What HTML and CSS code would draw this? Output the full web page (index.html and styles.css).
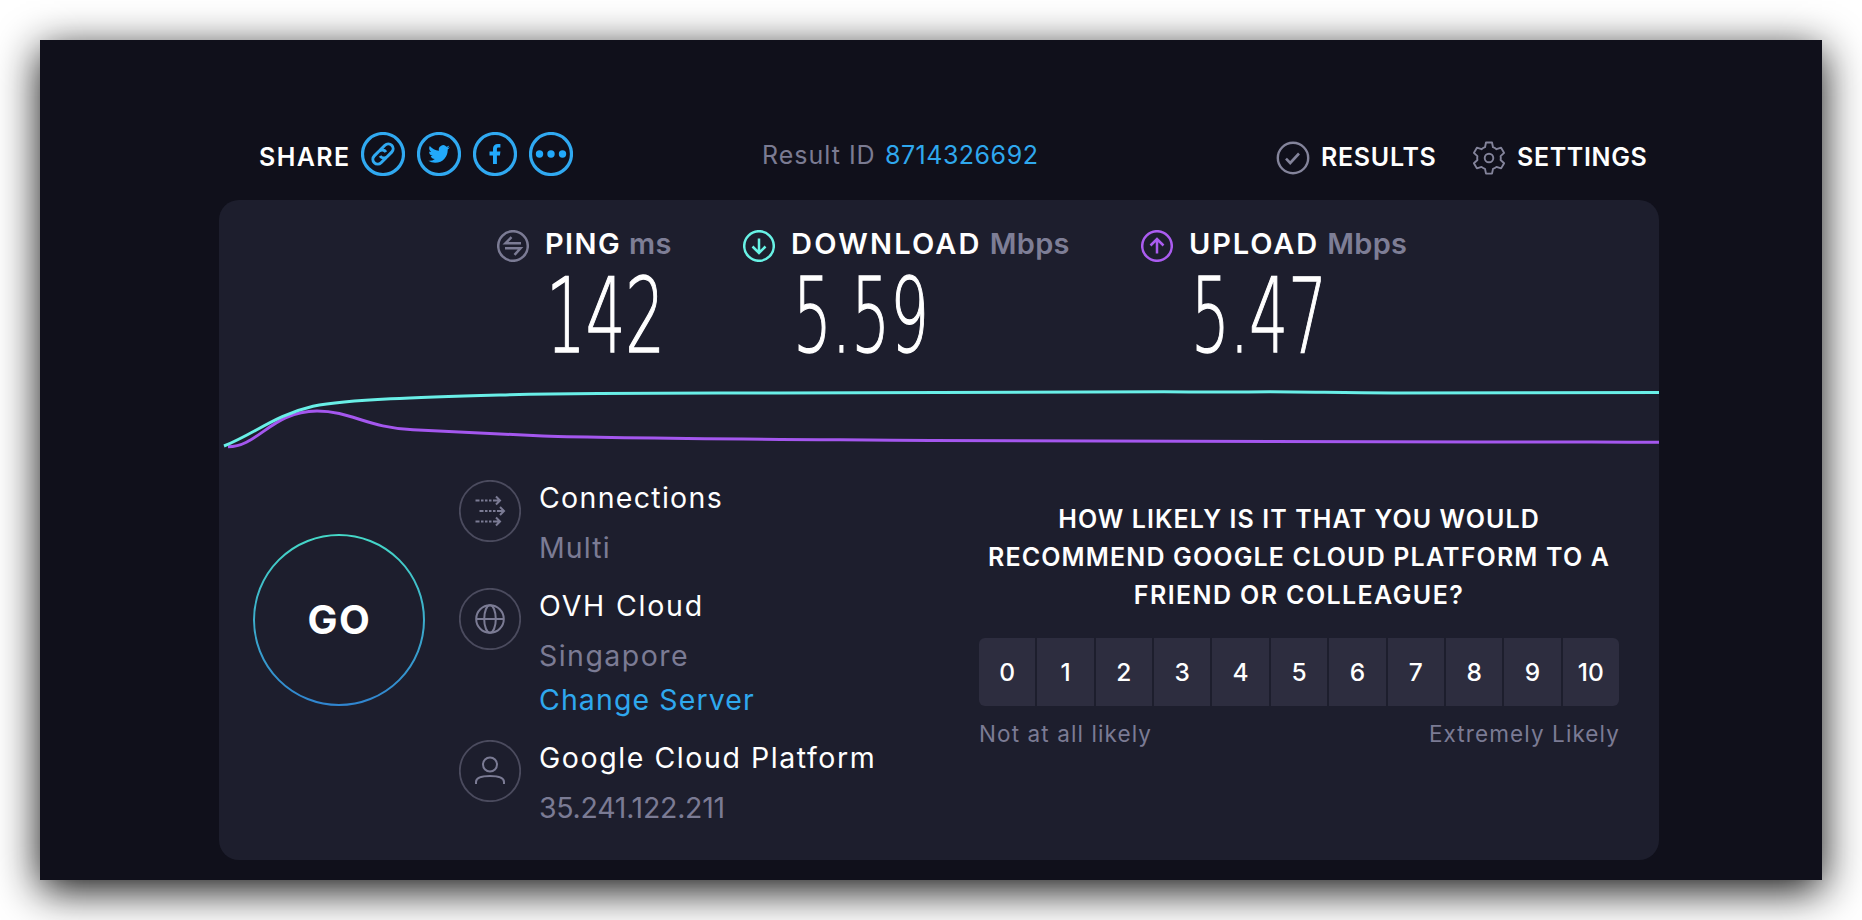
FILE: index.html
```html
<!DOCTYPE html>
<html lang="en">
<head>
<meta charset="utf-8">
<title>Speedtest</title>
<link rel="stylesheet" href="styles.css">
</head>
<body>
<main class="window">
  <header class="topbar">
    <span class="caps share-label">SHARE</span>
    <div class="share-icons">
      <svg class="share" viewBox="0 0 44 44"><circle cx="22" cy="22" r="20.5"/><g transform="rotate(-45 22 22)" stroke-width="3"><path d="M22 26.800h-7.500a4.800 4.800 0 0 1 0-9.600h6.500a4.600 4.600 0 0 1 4.500 5.500"/><path d="M22 17.200h7.500a4.800 4.800 0 0 1 0 9.600h-6.500a4.600 4.600 0 0 1-4.500-5.500"/></g></svg>
      <svg class="share" viewBox="0 0 44 44"><circle cx="22" cy="22" r="20.5"/><path class="solid" transform="translate(11.300 11.200) scale(.9)" d="M23.953 4.570a10 10 0 01-2.825.775 4.958 4.958 0 002.163-2.723c-.951.555-2.005.959-3.127 1.184a4.920 4.920 0 00-8.384 4.482C7.690 8.095 4.067 6.130 1.640 3.162a4.822 4.822 0 00-.666 2.475c0 1.710.870 3.213 2.188 4.096a4.904 4.904 0 01-2.228-.616v.060a4.923 4.923 0 003.946 4.827 4.996 4.996 0 01-2.212.085 4.936 4.936 0 004.604 3.417 9.867 9.867 0 01-6.102 2.105c-.390 0-.779-.023-1.170-.067a13.995 13.995 0 007.557 2.209c9.053 0 13.998-7.496 13.998-13.985 0-.210 0-.420-.015-.630A9.935 9.935 0 0024 4.590z"/></svg>
      <svg class="share" viewBox="0 0 44 44"><circle cx="22" cy="22" r="20.5"/><path class="solid" d="M20 32V23.500h-3.500v-4H20v-2.700c0-3.300 2-4.900 4.900-4.900h2.500v3.600h-2c-1.200 0-1.500.7-1.500 1.700v2.300h3.500l-.5 4h-3V32z"/></svg>
      <svg class="share" viewBox="0 0 44 44"><circle cx="22" cy="22" r="20.5"/><g class="solid"><circle cx="10.500" cy="22" r="3.700"/><circle cx="22" cy="22" r="3.700"/><circle cx="33.500" cy="22" r="3.700"/></g></svg>
    </div>
    <div class="result"><span class="result-label">Result ID</span><a class="result-id">8714326692</a></div>
    <svg class="nav-icon" viewBox="0 0 34 34"><circle cx="17" cy="17" r="15.200" stroke-width="2.400"/><path d="M10 17.700l4.200 4.300 8.800-9.500" stroke-width="2.600"/></svg>
    <span class="caps nav-results">RESULTS</span>
    <svg class="nav-icon" viewBox="0 0 34 34"><path stroke-width="1.900" stroke-linejoin="round" d="M14 1.500h6l1 4.700q2 .7 3.500 2l4.600-1.500 3 5.200-3.500 3.200q.4 2 0 3.900l3.500 3.200-3 5.200-4.600-1.500q-1.500 1.300-3.500 2l-1 4.700h-6l-1-4.700q-2-.7-3.500-2l-4.600 1.500-3-5.200 3.500-3.200q-.4-2 0-3.900l-3.500-3.200 3-5.200 4.600 1.500q1.500-1.300 3.500-2z"/><circle cx="17" cy="17" r="4.300" stroke-width="1.900"/></svg>
    <span class="caps nav-settings">SETTINGS</span>
  </header>

  <section class="panel">
    <div class="metrics">
      <div class="metric ping">
        <svg class="metric-icon" viewBox="0 0 32 32"><circle cx="16" cy="16" r="14.800"/><path d="M24 13.200H8.500l6-6M8 18.300h15.500l-6 6.500"/></svg>
        <div class="metric-body">
          <div class="metric-head"><span class="metric-name">PING</span><span class="unit">ms</span></div>
          <svg class="value" width="150" height="90"><text x="1" y="78" textLength="119" lengthAdjust="spacingAndGlyphs">142</text></svg>
        </div>
      </div>
      <div class="metric download">
        <svg class="metric-icon" viewBox="0 0 32 32"><circle cx="16" cy="16" r="14.800"/><path d="M16 8.500v14.500M9.500 16.500l6.500 6.500 6.500-6.500"/></svg>
        <div class="metric-body">
          <div class="metric-head"><span class="metric-name">DOWNLOAD</span><span class="unit">Mbps</span></div>
          <svg class="value" width="150" height="90"><text x="2" y="78" textLength="136" lengthAdjust="spacingAndGlyphs">5.59</text></svg>
        </div>
      </div>
      <div class="metric upload">
        <svg class="metric-icon" viewBox="0 0 32 32"><circle cx="16" cy="16" r="14.800"/><path d="M16 23.500V9M9.500 15.500L16 9l6.500 6.500"/></svg>
        <div class="metric-body">
          <div class="metric-head"><span class="metric-name">UPLOAD</span><span class="unit">Mbps</span></div>
          <svg class="value" width="150" height="90"><text x="2" y="78" textLength="136" lengthAdjust="spacingAndGlyphs">5.47</text></svg>
        </div>
      </div>
    </div>

    <svg class="chart" viewBox="219 380 1440 80">
      <path class="line-up" d="M228 446.800C258 447 272 411 317 411C351 411 368 428 413 429.700C460 432 503 434 543 436C620 438.500 740 439 931 440.500C1150 442 1350 441.500 1480 442C1560 441.500 1610 442.500 1659 442.200"/>
      <path class="line-down" d="M224 446C256 433 275 415 313 406.200C350 399 430 397 510 394.700C600 392.800 680 393.200 780 393C950 393 1060 391.800 1164 391.800C1190 391.800 1220 392.500 1270 391.800C1310 391.800 1350 393.200 1400 393C1500 393 1560 392.300 1659 392.500"/>
    </svg>

    <div class="details">
      <button class="go"><svg viewBox="0 0 172 172"><defs><linearGradient id="ring" x1="0" y1="0" x2="0" y2="1"><stop offset="0" stop-color="#45d9c8"/><stop offset=".5" stop-color="#3cadcb"/><stop offset="1" stop-color="#3085d0"/></linearGradient></defs><circle cx="86" cy="86" r="85" fill="none" stroke="url(#ring)" stroke-width="2"/></svg><span>GO</span></button>

      <div class="info">
        <div class="info-row">
          <svg class="info-icon" viewBox="0 0 62 62"><circle class="ring" cx="31" cy="31" r="30.200"/><path d="M16.500 20.500h4M22 20.500h2.500M26 20.500h2.500M30 20.500h2.500M34 20.500h7M37 16.500l4 4-4 4M20.500 31h4M26 31h2.500M30 31h2.500M34 31h2.500M38 31h7M41 27l4 4-4 4M16.500 41.500h4M22 41.500h2.500M26 41.500h2.500M30 41.500h2.500M34 41.500h7M37 37.500l4 4-4 4"/></svg>
          <div class="info-text"><div class="info-title t-conn">Connections</div><div class="info-sub t-multi">Multi</div></div>
        </div>
        <div class="info-row server">
          <svg class="info-icon" viewBox="0 0 62 62"><circle class="ring" cx="31" cy="31" r="30.200"/><circle cx="31" cy="31" r="13.800"/><ellipse cx="31" cy="31" rx="5.800" ry="13.800"/><path d="M17 31h28"/></svg>
          <div class="info-text"><div class="info-title t-ovh">OVH Cloud</div><div class="info-sub t-sing">Singapore</div><a class="change">Change Server</a></div>
        </div>
        <div class="info-row">
          <svg class="info-icon" viewBox="0 0 62 62"><circle class="ring" cx="31" cy="31" r="30.200"/><circle cx="31" cy="24.500" r="7"/><path d="M17 44v-2c0-4.500 5-6 14-6s14 1.500 14 6v2"/></svg>
          <div class="info-text"><div class="info-title t-goog">Google Cloud Platform</div><div class="info-sub t-ip">35.241.122.211</div></div>
        </div>
      </div>

      <div class="survey">
        <h2><span class="q1">HOW LIKELY IS IT THAT YOU WOULD</span><br><span class="q2">RECOMMEND GOOGLE CLOUD PLATFORM TO A</span><br><span class="q3">FRIEND OR COLLEAGUE?</span></h2>
        <div class="scale"><span>0</span><span>1</span><span>2</span><span>3</span><span>4</span><span>5</span><span>6</span><span>7</span><span>8</span><span>9</span><span>10</span></div>
        <div class="legend"><span class="low">Not at all likely</span><span class="high">Extremely Likely</span></div>
      </div>
    </div>
  </section>
</main>
</body>
</html>
```
FILE: styles.css
```css
* { box-sizing: border-box; }
body { margin: 0; padding: 40px; height: 920px; overflow: hidden; background: #fff; font-family: Inter, "Liberation Sans", sans-serif; color: #fff; }
svg { display: block; flex: none; }
.window { width: 1782px; height: 840px; padding: 90px 163px 0 179px; background: #10101b; box-shadow: 0 10px 40px rgba(0, 0, 0, .95); }
.topbar { display: flex; height: 70px; padding-left: 40px; white-space: nowrap; }
.caps { font-size: 25px; font-weight: 600; line-height: 54px; }
.share-label { width: 102px; letter-spacing: 1.400px; }
.share-icons { display: flex; gap: 12px; width: 402px; padding-top: 2px; }
.share { width: 44px; height: 44px; fill: none; stroke: #30a9f1; stroke-width: 3.200; }
.share .solid { fill: #22a9fb; stroke: none; }
.result { display: flex; width: 513px; font-size: 25px; line-height: 50px; }
.result-label { width: 123px; margin-left: -1px; color: #7b7b92; letter-spacing: 1px; }
.result-id { color: #2fa8ee; letter-spacing: .500px; }
.nav-icon { width: 34px; height: 34px; margin-top: 11px; fill: none; stroke: #84849b; }
.nav-results { width: 162px; padding-left: 11px; letter-spacing: .7px; }
.nav-settings { padding-left: 11px; letter-spacing: .650px; }

.panel { width: 1440px; height: 660px; border-radius: 20px; background: #1d1e2d; }
.metrics { display: flex; height: 180px; padding: 22px 0 0 278px; white-space: nowrap; }
.metric { display: flex; gap: 16px; }
.ping { width: 246px; }
.download { width: 398px; }
.metric-icon { width: 32px; height: 32px; margin-top: 8px; fill: none; stroke: #7b7b94; stroke-width: 2.500; }
.download .metric-icon { stroke: #68f2e5; }
.upload .metric-icon { stroke: #ab5cf0; }
.metric-head { display: flex; gap: 8px; height: 52px; font-size: 29px; font-weight: 600; line-height: 44px; }
.metric-name { letter-spacing: 1.400px; }
.download .metric-name { letter-spacing: 2.200px; }
.upload .metric-name { letter-spacing: 1.900px; }
.unit { color: #7e7e96; letter-spacing: .3px; }
.value { overflow: visible; fill: #fff; font: 200 103px "DejaVu Sans Light", "DejaVu Sans", sans-serif; }
.value text { stroke: #fff; stroke-width: 1.400; }
.chart { width: 1440px; height: 80px; fill: none; stroke-width: 3; }
.line-down { stroke: #69efe7; }
.line-up { stroke: #a457ee; }

.details { display: flex; padding-left: 34px; }
.go { display: grid; place-items: center; width: 172px; height: 172px; margin: 74px 34px 0 0; padding: 0; border: 0; background: none; color: #fff; font: 700 40px Inter, sans-serif; }
.go svg, .go span { grid-area: 1 / 1; }
.go span { padding: 0 0 2px 1px; letter-spacing: 1.500px; }
.info { width: 520px; padding-top: 20px; white-space: nowrap; }
.info-row { display: flex; gap: 18px; height: 108px; }
.server { height: 152px; }
.info-icon { width: 62px; height: 62px; fill: none; stroke: #7b7b94; stroke-width: 2; }
.info-icon .ring { stroke: #4b4b5e; stroke-width: 1.800; }
.info-text { font-size: 28.500px; }
.info-title { height: 43px; line-height: 36px; }
.info-sub { height: 50px; line-height: 50px; color: #7b7b94; }
.t-conn { letter-spacing: 1.300px; }
.t-multi { letter-spacing: 1.100px; }
.t-ovh { letter-spacing: 1.800px; }
.t-sing { letter-spacing: 1.450px; }
.t-goog { letter-spacing: 1.570px; }
.t-ip { letter-spacing: -.27px; }
.change { line-height: 38px; color: #2fa8ee; letter-spacing: 1.100px; }
.survey { width: 640px; padding-top: 40px; }
h2 { margin: 0; height: 138px; font-size: 25px; font-weight: 600; line-height: 38px; text-align: center; white-space: nowrap; }
.q1 { letter-spacing: 1.070px; }
.q2 { letter-spacing: 1.150px; }
.q3 { letter-spacing: 1.400px; }
.scale { display: grid; grid-template-columns: repeat(11, 1fr); gap: 2px; height: 68px; border-radius: 6px; overflow: hidden; font-size: 24.500px; font-weight: 500; line-height: 68px; text-align: center; }
.scale span { background: #2d2d3f; }
.legend { display: flex; justify-content: space-between; color: #7b7b94; font-size: 22.500px; line-height: 56px; letter-spacing: 1.100px; }
.high { margin-right: -1px; }
```
